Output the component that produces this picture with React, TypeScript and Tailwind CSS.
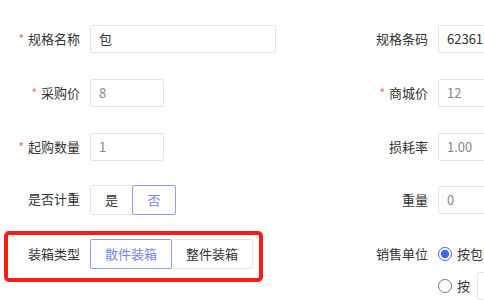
import React from 'react';

const font = { fontFamily: '"Noto Sans CJK SC", "Liberation Sans", sans-serif' };

function Label({ text, required }: { text: string; required?: boolean }) {
  return (
    <div className="w-[90px] shrink-0 flex items-center justify-end pr-[10px] text-[13px] text-[#333]">
      {required && <span className="text-[#f56c6c] mr-[4px] text-[12px]">*</span>}
      {text}
    </div>
  );
}

function Box({ value, w, dark }: { value: string; w: string; dark?: boolean }) {
  return (
    <div
      className={`${w} h-[28px] shrink-0 border border-[#e2e4ea] rounded-[2px] bg-white flex items-center px-[8px] text-[13px] overflow-hidden whitespace-nowrap ${
        dark ? 'text-[#333]' : 'text-[#888]'
      }`}
    >
      {value}
    </div>
  );
}

function Seg({ options, active, w }: { options: string[]; active: number; w: string[] }) {
  return (
    <div className="flex h-[30px]">
      {options.map((o, i) => (
        <div
          key={o}
          className={`${w[i]} flex items-center justify-center text-[13px] rounded-[2px] border ${
            i === active ? 'border-[#8c9ef2] text-[#7286e6] relative' : 'border-[#e6e6e6] text-[#333]'
          }`}
        >
          {o}
        </div>
      ))}
    </div>
  );
}

export default function App() {
  return (
    <div className="w-[484px] h-[300px] overflow-hidden bg-white" style={font}>
      <div className="w-[640px] pt-[25px] flex flex-col gap-[26px]">
        <div className="flex h-[28px]">
          <div className="w-[348px] flex">
            <Label text="规格名称" required />
            <Box value="包" w="w-[186px]" dark />
          </div>
          <div className="flex">
            <Label text="规格条码" />
            <Box value="6236112345678" w="w-[186px]" dark />
          </div>
        </div>

        <div className="flex h-[28px]">
          <div className="w-[348px] flex">
            <Label text="采购价" required />
            <Box value="8" w="w-[74px]" />
          </div>
          <div className="flex">
            <Label text="商城价" required />
            <Box value="12" w="w-[74px]" />
          </div>
        </div>

        <div className="flex h-[28px]">
          <div className="w-[348px] flex">
            <Label text="起购数量" required />
            <Box value="1" w="w-[74px]" />
          </div>
          <div className="flex">
            <Label text="损耗率" />
            <Box value="1.00" w="w-[74px]" />
          </div>
        </div>

        <div className="flex h-[28px] -mt-[2px]">
          <div className="w-[348px] flex">
            <Label text="是否计重" />
            <Seg options={['是', '否']} active={1} w={['w-[43px]', 'w-[44px] -ml-px']} />
          </div>
          <div className="flex pt-[1px]">
            <Label text="重量" />
            <Box value="0" w="w-[74px]" />
          </div>
        </div>

        <div className="flex items-start">
          <div className="w-[348px] h-[30px] flex relative">
            <Label text="装箱类型" />
            <Seg options={['散件装箱', '整件装箱']} active={0} w={['w-[82px]', 'w-[82px] -ml-px']} />
            <div className="absolute left-[4px] top-[-8px] w-[259px] h-[51px] border-[4px] border-[#ff1a1a] rounded-[5px]" />
          </div>
          <div className="flex flex-col">
            <div className="flex h-[30px] shrink-0 items-center">
              <Label text="销售单位" />
              <label className="flex items-center gap-[5px] text-[13px] text-[#333] whitespace-nowrap">
                <input type="radio" name="unit" defaultChecked className="w-[14px] h-[14px] m-0 accent-[#4169e1]" />
                按包装单位
              </label>
            </div>
            <div className="flex items-center h-[30px] shrink-0 mt-[2px] pl-[90px]">
              <label className="flex items-center gap-[5px] text-[13px] text-[#333] whitespace-nowrap">
                <input type="radio" name="unit" className="w-[14px] h-[14px] m-0" />
                按
              </label>
              <div className="ml-[7px] w-[60px] h-[28px] border border-[#e2e4ea] rounded-[2px] -mt-[1px]" />
            </div>
          </div>
        </div>
      </div>
    </div>
  );
}
